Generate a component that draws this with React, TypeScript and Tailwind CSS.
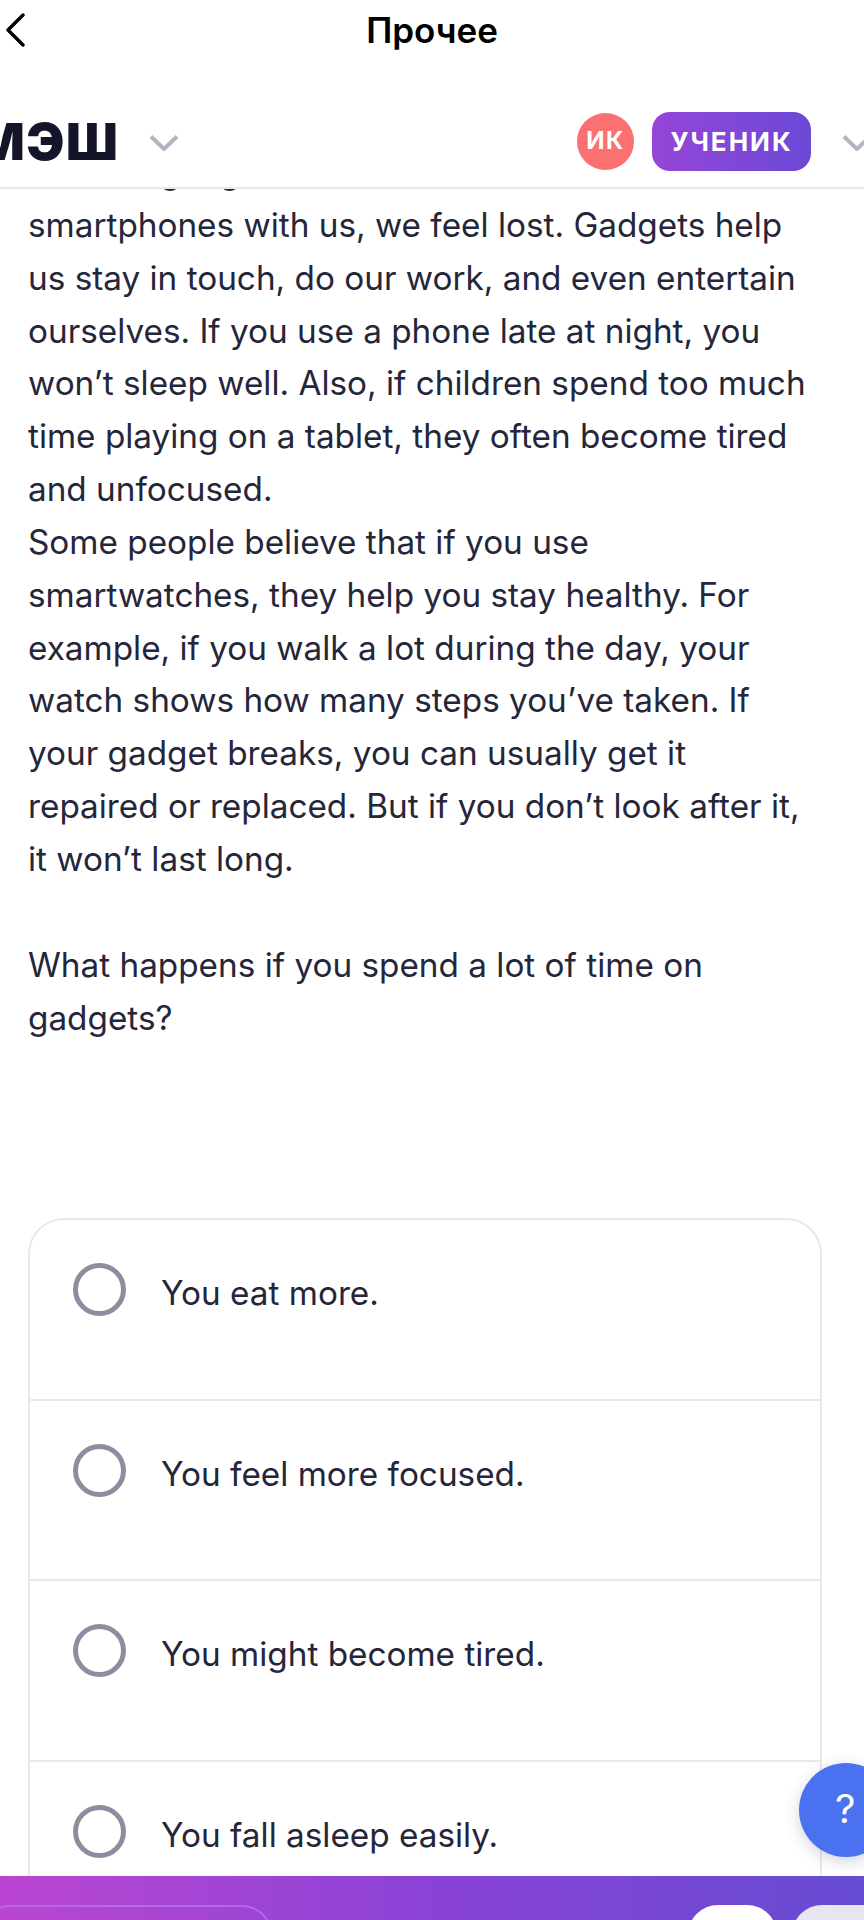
const Chevron = ({ className }: { className: string }) => (
  <svg viewBox="0 0 30 18" fill="none" className={className}>
    <path d="M2 2.5 L15 15 L28 2.5" stroke="#b4b5c3" strokeWidth="4" strokeLinejoin="round" />
  </svg>
);

const Option = ({ label, last }: { label: string; last?: boolean }) => (
  <div className={`flex h-[180.5px] items-start pl-[43px] pt-[43px] ${last ? "" : "border-b-2 border-[#e9e9ed]"}`}>
    <span className="h-[53px] w-[53px] shrink-0 rounded-full border-[5px] border-[#8c8e9f]" />
    <span className="ml-[35px] mt-[4px] text-[33.3px] leading-[52px] text-[#25263a]">{label}</span>
  </div>
);

export default function App() {
  return (
    <div className="relative flex h-[1920px] w-[864px] flex-col overflow-hidden bg-white font-['Inter',sans-serif]">
      <div className="relative flex h-[60px] shrink-0 items-center justify-center">
        <svg viewBox="0 0 20 34" fill="none" className="absolute left-[5px] top-[13px] h-[34px] w-[20px]">
          <path d="M18 2 L3 17 L18 32" stroke="#000" strokeWidth="3.4" strokeLinecap="round" strokeLinejoin="round" />
        </svg>
        <span className="text-[35px] font-semibold leading-[60px] text-black">Прочее</span>
      </div>

      <div className="flex h-[129px] shrink-0 items-center border-b-2 border-[#e9e9ed] pt-[35px]">
        <span className="ml-[-24px] text-[51px] font-black leading-none tracking-[1.5px] text-[#14142b]">МЭШ</span>
        <Chevron className="ml-[30px] mt-[4px] h-[18px] w-[30px]" />
        <span className="ml-auto flex h-[57px] w-[57px] items-center justify-center rounded-full bg-[#fb7070] text-[24px] font-bold tracking-[1.5px] text-white">ИК</span>
        <span className="ml-[18px] flex h-[59px] w-[159px] items-center justify-center rounded-[18px] bg-gradient-to-r from-[#9545d8] to-[#6b48d6] text-[26px] font-bold tracking-[2px] text-white">УЧЕНИК</span>
        <Chevron className="mr-[-8px] ml-[31px] mt-[4px] h-[18px] w-[30px] shrink-0" />
      </div>

      <div className="min-h-0 flex-1 overflow-hidden px-[28px] pr-[42px]">
        <div className="mt-[-43px] pr-[1px] text-[33.3px] leading-[52.85px] text-[#25263a]">
          <p>Modern gadgets are useful. If we don’t have our</p>
          <p>smartphones with us, we feel lost. Gadgets help us stay in touch, do our work, and even entertain ourselves. If you use a phone late at night, you won’t sleep well. Also, if children spend too much time playing on a tablet, they often become tired and unfocused.</p>
          <p>Some people believe that if you use smartwatches, they help you stay healthy. For example, if you walk a lot during the day, your watch shows how many steps you’ve taken. If your gadget breaks, you can usually get it repaired or replaced. But if you don’t look after it, it won’t last long.</p>
          <p className="mt-[52.85px]">What happens if you spend a lot of time on gadgets?</p>
        </div>
        <div className="mt-[174px] rounded-t-[36px] border-2 border-[#e9e9ed]">
          <Option label="You eat more." />
          <Option label="You feel more focused." />
          <Option label="You might become tired." />
          <Option label="You fall asleep easily." last />
        </div>
      </div>

      <div className="flex h-[44px] shrink-0 items-start bg-gradient-to-r from-[#bb45d2] via-[#8a42d6] to-[#664bd2] pt-[29px]">
        <div className="ml-[-20px] h-[40px] w-[292px] rounded-t-[30px] border-2 border-[#b36ae3]" />
        <div className="ml-auto h-[40px] w-[89px] rounded-t-[30px] bg-white" />
        <div className="ml-[15px] mr-[-40px] h-[40px] w-[112px] rounded-t-[30px] bg-[#e6e6ee]" />
      </div>

      <div className="absolute left-[799px] top-[1763px] flex h-[94px] w-[94px] items-center rounded-full bg-[#4a72f0] pb-[2px] pl-[36px] text-[40px] font-normal text-white shadow-[0_4px_16px_rgba(30,40,90,0.2)]">?</div>
    </div>
  );
}
